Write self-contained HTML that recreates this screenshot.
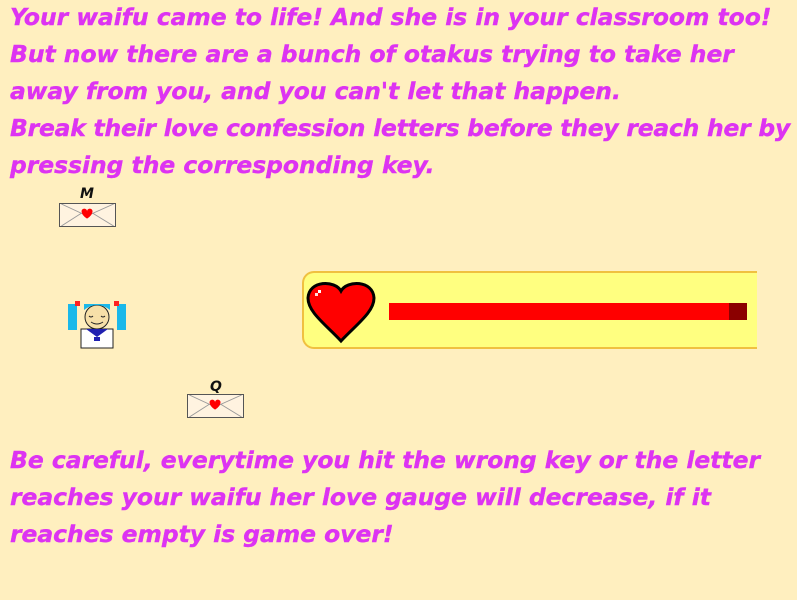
<!DOCTYPE html>
<html><head><style>
body{margin:0;width:797px;height:600px;background:#ffefbf;overflow:hidden;position:relative;font-family:"DejaVu Sans","Liberation Sans",sans-serif;}
.t{position:absolute;left:10px;color:#dd33f2;font-weight:bold;font-style:italic;font-size:23.4px;line-height:37px;white-space:nowrap;-webkit-text-stroke:0.4px #dd33f2;}
.env{position:absolute;width:57px;height:24px;background:#fff3e0;border:1px solid #555;box-sizing:border-box;overflow:hidden}
.k{position:absolute;font:bold italic 14px "DejaVu Sans",sans-serif;color:#111}
</style></head><body>
<div class="t" style="top:-1px">Your waifu came to life! And she is in your classroom too!<br>But now there are a bunch of otakus trying to take her<br>away from you, and you can't let that happen.<br><span style="letter-spacing:-0.2px">Break their love confession letters before they reach her by</span><br>pressing the corresponding key.</div>
<div class="k" style="left:80px;top:186px">M</div>
<svg class="env" style="left:59px;top:203px" viewBox="0 0 57 24"><path d="M0 0L28 13L57 0M0 24L22 10M57 24L34 10" stroke="#999" fill="none"/><path d="M22 8a3 3 0 0 1 6 0a3 3 0 0 1 6 0q0 4-6 8q-6-4-6-8z" fill="#f00"/></svg>
<div class="k" style="left:210px;top:379px">Q</div>
<svg class="env" style="left:187px;top:394px" viewBox="0 0 57 24"><path d="M0 0L28 13L57 0M0 24L22 10M57 24L34 10" stroke="#999" fill="none"/><path d="M22 8a3 3 0 0 1 6 0a3 3 0 0 1 6 0q0 4-6 8q-6-4-6-8z" fill="#f00"/></svg>
<svg style="position:absolute;left:68px;top:300px" width="60" height="50" viewBox="0 0 60 50">
<rect x="0" y="4" width="9" height="26" fill="#1ab8ea"/><rect x="49" y="4" width="9" height="26" fill="#1ab8ea"/>
<circle cx="29" cy="17" r="12" fill="#f7e0a8" stroke="#222"/>
<path d="M16 10q13-10 26 0v-6h-26z" fill="#1ab8ea"/>
<path d="M21 16q2 2 4 0M33 16q2 2 4 0M23 22q6 4 12 0" stroke="#222" fill="none"/>
<rect x="13" y="29" width="32" height="19" fill="#fff" stroke="#222"/>
<path d="M18 29L29 37L40 29" fill="#2020b0"/><rect x="26" y="37" width="6" height="4" fill="#2020b0"/>
<rect x="7" y="1" width="5" height="5" fill="#f22"/><rect x="46" y="1" width="5" height="5" fill="#f22"/>
</svg>
<div style="position:absolute;left:302px;top:271px;width:470px;height:78px;background:#ffff80;border:2px solid #f0c040;border-right:none;border-radius:12px 0 0 12px;box-sizing:border-box"></div>
<div style="position:absolute;left:757px;top:268px;width:40px;height:90px;background:#ffefbf"></div>
<svg style="position:absolute;left:305px;top:279px" width="72" height="66" viewBox="0 0 72 66">
<path d="M36 12C30 1 4 1 3 19C3 33 20 45 36 62C52 45 69 33 69 19C68 1 42 1 36 12Z" fill="#f00" stroke="#000" stroke-width="3"/>
<rect x="13" y="11" width="3" height="3" fill="#fff"/><rect x="10" y="14" width="3" height="3" fill="#fdd"/></svg>
<div style="position:absolute;left:389px;top:303px;width:358px;height:17px;background:#f00"></div>
<div style="position:absolute;left:729px;top:303px;width:18px;height:17px;background:#8b0000"></div>
<div class="t" style="top:442px">Be careful, everytime you hit the wrong key or the letter<br>reaches your waifu her love gauge will decrease, if it<br>reaches empty is game over!</div>
</body></html>
